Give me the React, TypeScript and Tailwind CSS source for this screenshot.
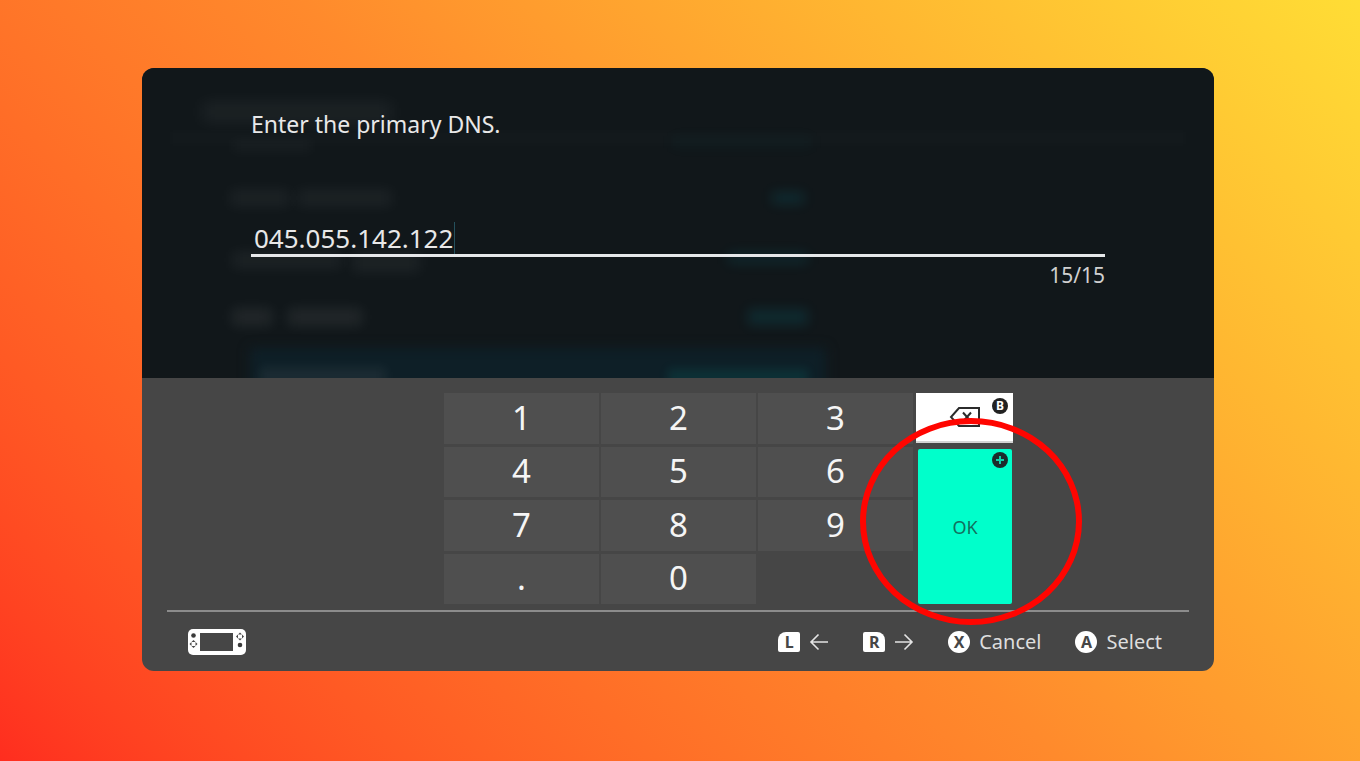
import { useState } from 'react'
import type { ReactNode } from 'react'

const MAX_LENGTH = 15

const keys = ['1', '2', '3', '4', '5', '6', '7', '8', '9', '.', '0']

function ConsoleIcon() {
    return (
        <svg width="60" height="28" viewBox="0 0 60 28" aria-hidden="true">
            <rect x="1" y="1" width="58" height="26" rx="5" fill="#fff" />
            <rect x="13" y="5" width="33" height="18" fill="#464646" />
            <circle cx="6.5" cy="7.5" r="2.3" fill="#3a3a3a" />
            <circle cx="53" cy="17" r="2.3" fill="#3a3a3a" />
            <g fill="#464646">
                <path d="M6.5 12l2 2h-4zM6.5 20l2-2h-4zM2.5 16l2-2v4zM10.5 16l-2-2v4z" />
                <path d="M53 4.500l2 2h-4zM53 12.500l2-2h-4zM49 8.500l2-2v4zM57 8.500l-2-2v4z" />
            </g>
        </svg>
    )
}

function BackspaceIcon() {
    return (
        <svg width="32" height="22" viewBox="0 0 32 22" fill="none" stroke="#2b2b2b" strokeWidth="2" aria-hidden="true">
            <path d="M10 2H30V20H10L2 11Z" />
            <path d="M14 6.500L22 15.500M22 6.500L14 15.500" />
        </svg>
    )
}

function PlusBadge() {
    return (
        <svg width="16" height="16" viewBox="0 0 16 16" aria-hidden="true">
            <circle cx="8" cy="8" r="8" fill="#1c2b2b" />
            <path d="M8 4v8M4 8h8" stroke="#0ecfa8" strokeWidth="2" />
        </svg>
    )
}

function Arrow({ direction }: { direction: 'left' | 'right' }) {
    return (
        <svg width="20" height="18" viewBox="0 0 20 18" fill="none" stroke="#e4e4e4" strokeWidth="1.600" aria-hidden="true">
            {direction === 'left' ? (
                <path d="M19 9H2M9.500 1.500L2 9l7.500 7.500" />
            ) : (
                <path d="M1 9h17M10.500 1.500L18 9l-7.500 7.500" />
            )}
        </svg>
    )
}

function RoundBadge({ children }: { children: ReactNode }) {
    return (
        <span className="flex size-[22px] items-center justify-center rounded-full bg-white text-base font-bold leading-none text-[#464646]">
            {children}
        </span>
    )
}

// The settings screen that shows faintly behind the prompt
function Backdrop() {
    return (
        <div className="absolute inset-0 overflow-hidden" aria-hidden="true">
            <div className="absolute left-[60px] top-[34px] h-5 w-[190px] bg-white/5 blur-[8px]" />
            <div className="absolute left-[28px] right-[28px] top-[62px] h-4 bg-white/1 blur-[3px]" />
            <div className="absolute left-[90px] top-[72px] h-3 w-20 bg-white/3 blur-[6px]" />
            <div className="absolute left-[530px] top-[68px] h-3 w-[140px] bg-teal-400/3 blur-[6px]" />
            <div className="absolute left-[88px] top-[122px] h-4 w-[60px] bg-white/5 blur-[7px]" />
            <div className="absolute left-[155px] top-[122px] h-4 w-[95px] bg-white/5 blur-[7px]" />
            <div className="absolute left-[630px] top-[124px] h-3 w-8 bg-cyan-400/10 blur-[6px]" />
            <div className="absolute left-[90px] top-[184px] h-4 w-[110px] bg-white/5 blur-[7px]" />
            <div className="absolute left-[210px] top-[184px] h-5 w-[68px] bg-white/5 blur-[7px]" />
            <div className="absolute left-[586px] top-[184px] h-3 w-20 bg-cyan-400/8 blur-[6px]" />
            <div className="absolute left-[90px] top-[241px] h-4 w-10 bg-white/8 blur-[7px]" />
            <div className="absolute left-[146px] top-[241px] h-4 w-[74px] bg-white/8 blur-[7px]" />
            <div className="absolute left-[606px] top-[241px] h-4 w-[60px] bg-cyan-400/10 blur-[6px]" />
            <div className="absolute left-[108px] top-[280px] h-14 w-[576px] bg-[#0e1f27] blur-[6px]" />
            <div className="absolute left-[118px] top-[300px] h-4 w-[126px] bg-white/6 blur-[6px]" />
            <div className="absolute left-[526px] top-[301px] h-4 w-[140px] bg-teal-400/10 blur-[5px]" />
        </div>
    )
}

export default function App() {
    const [value, setValue] = useState('045.055.142.122')

    const addKey = (key: string) => {
        setValue((current) => (current + key).slice(0, MAX_LENGTH))
    }

    return (
        <main className="min-h-screen bg-linear-45 from-[#ff2d1f] via-[#ff8a2c] to-[#ffdd35] pt-[68px] pr-[146px] pb-[90px] pl-[142px] font-['Noto_Sans','Open_Sans',sans-serif] text-white">
            <div className="overflow-hidden rounded-xl bg-[#464646]">
                <section className="relative h-[310px] bg-[#11171a]">
                    <Backdrop />
                    <div className="relative px-[109px] pt-10">
                        <label htmlFor="dns" className="block text-[23px] leading-8 text-[#e8e8e8]">
                            Enter the primary DNS.
                        </label>
                        <div className="mt-[81px] flex h-9 items-center border-b-3 border-[#e6e8ea] pl-[3px]">
                            <input
                                id="dns"
                                type="text"
                                inputMode="decimal"
                                maxLength={MAX_LENGTH}
                                value={value}
                                onChange={(e) => setValue(e.target.value)}
                                className="field-sizing-content bg-transparent text-[26px] leading-8 text-[#e8e8e8] outline-none"
                            />
                            <span className="ml-px h-8 w-px bg-[#24505c]" />
                        </div>
                        <p className="mt-[2px] text-right text-[21px] leading-8 text-[#d0d0d0]">
                            {value.length}/{MAX_LENGTH}
                        </p>
                    </div>
                </section>

                <section className="flex h-[232px] justify-center pt-[15px] pb-[6px] pl-[101px]">
                    <div className="grid grid-cols-[repeat(3,155px)] grid-rows-4 gap-x-[2px] gap-y-[3px]">
                        {keys.map((key) => (
                            <button
                                key={key}
                                type="button"
                                onClick={() => addKey(key)}
                                className="bg-[#4f4f4f] pb-[2px] text-[33px] leading-none text-[#f5f5f5]"
                            >
                                {key}
                            </button>
                        ))}
                    </div>
                    <div className="relative ml-[3px] flex w-[97px] flex-col gap-1.5">
                        <button
                            type="button"
                            aria-label="Delete"
                            onClick={() => setValue((current) => current.slice(0, -1))}
                            className="relative flex h-[50px] items-center justify-center border-b-2 border-[#d4d4d4] bg-white"
                        >
                            <BackspaceIcon />
                            <span className="absolute top-[5px] right-[5px] flex size-4 items-center justify-center rounded-full bg-[#222] text-xs leading-none font-bold text-white">
                                B
                            </span>
                        </button>
                        <button
                            type="button"
                            className="relative mr-px ml-[2px] flex-1 rounded-xs bg-[#00ffcb] text-lg text-[#12705e]"
                        >
                            OK
                            <span className="absolute top-[3px] right-1">
                                <PlusBadge />
                            </span>
                        </button>
                        <div className="pointer-events-none absolute top-[25px] left-[-56px] h-[207px] w-[222px] rounded-[50%] border-6 border-[#ff0500]" />
                    </div>
                </section>

                <footer className="mx-[25px] flex h-[61px] items-center justify-between border-t-2 border-[#8c8c8c] pr-[27px] pl-5">
                    <ConsoleIcon />
                    <div className="flex items-center gap-[34px] text-xl leading-8 text-[#dedede]">
                        <div className="flex items-center gap-[9px]">
                            <span className="flex h-5 w-[22px] items-center justify-center rounded-xs rounded-tl-lg bg-white text-base leading-none font-bold text-[#464646]">
                                L
                            </span>
                            <Arrow direction="left" />
                        </div>
                        <div className="flex items-center gap-[9px]">
                            <span className="flex h-5 w-[22px] items-center justify-center rounded-xs rounded-tr-lg bg-white text-base leading-none font-bold text-[#464646]">
                                R
                            </span>
                            <Arrow direction="right" />
                        </div>
                        <button type="button" className="flex items-center gap-[9px]">
                            <RoundBadge>X</RoundBadge>
                            Cancel
                        </button>
                        <button type="button" className="flex items-center gap-[9px]">
                            <RoundBadge>A</RoundBadge>
                            Select
                        </button>
                    </div>
                </footer>
            </div>
        </main>
    )
}
